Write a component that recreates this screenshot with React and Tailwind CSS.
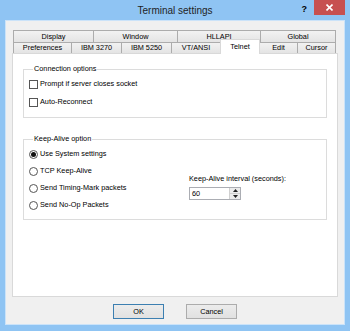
export default function App() {
  const row1 = [
    ["Display", "w-[80px]"],
    ["Window", "w-[84px]"],
    ["HLLAPI", "w-[83px]"],
    ["Global", "w-[76px]"],
  ];
  const row2 = [
    ["Preferences", "w-[58px]"],
    ["IBM 3270", "w-[50px]"],
    ["IBM 5250", "w-[50px]"],
    ["VT/ANSI", "w-[49px]"],
    ["Telnet", "w-[40px]", true],
    ["Edit", "w-[37px]"],
    ["Cursor", "w-[39px]"],
  ];
  const radios = [
    ["Use System settings", true],
    ["TCP Keep-Alive", false],
    ["Send Timing-Mark packets", false],
    ["Send No-Op Packets", false],
  ];
  return (
    <div className="w-[350px] h-[331px] bg-[#8fc4f3] flex flex-col overflow-hidden font-['Liberation_Sans',Arial,sans-serif] text-black">
      {/* title bar */}
      <div className="h-[20px] grid grid-cols-[1fr_auto_1fr] shrink-0">
        <div />
        <div className="text-[10px] leading-[12px] pt-[5px] text-[#1f1f1f]">Terminal settings</div>
        <div className="flex justify-end items-start pr-[5px]">
          <div className="text-[9px] leading-[10px] font-bold mt-[4px] mr-[7px]">?</div>
          <div className="w-[31px] h-[15px] bg-[#c75050] flex items-center justify-center">
            <svg width="7" height="7" viewBox="0 0 7 7">
              <path d="M0.5 0.5 L6.5 6.5 M6.5 0.5 L0.5 6.5" stroke="white" strokeWidth="1.6" />
            </svg>
          </div>
        </div>
      </div>
      {/* client */}
      <div className="flex-1 mx-[5px] mb-[6px] border border-[#cbe3f9] bg-[#f0f0f0] flex flex-col text-[7.3px] leading-[10px]">
        {/* tabs */}
        <div className="pl-[7px] pt-[9px] flex flex-col">
          <div className="flex h-[12px]">
            {row1.map(([t, w], i) => (
              <div
                key={t}
                className={`${w} border-t border-l ${i === row1.length - 1 ? "border-r" : ""} border-[#acacac] bg-gradient-to-b from-[#f2f2f2] to-[#e4e4e4] flex items-center justify-center`}
              >
                {t}
              </div>
            ))}
          </div>
          <div className="flex h-[11px] items-end relative z-10">
            {row2.map(([t, w, sel], i) =>
              sel ? (
                <div
                  key={t}
                  className={`${w} h-[15px] -mb-[1px] border-t border-l border-r border-[#d9d9d9] bg-white flex items-start justify-center pt-[2px]`}
                >
                  {t}
                </div>
              ) : (
                <div
                  key={t}
                  className={`${w} h-[11px] border-t ${row2[i - 1] && row2[i - 1][2] ? "" : "border-l"} ${i === row2.length - 1 ? "border-r" : ""} border-[#acacac] bg-gradient-to-b from-[#f2f2f2] to-[#e4e4e4] flex items-center justify-center`}
                >
                  {t}
                </div>
              )
            )}
          </div>
        </div>
        {/* panel */}
        <div className="ml-[6px] w-[326px] h-[244px] bg-white border border-[#d9d9d9] flex flex-col px-[10px]">
          <fieldset className="mt-[10px] border border-[#dcdcdc] pl-[5px] pb-[9px]">
            <legend className="ml-[4px] px-[1px] leading-[10px]">Connection options</legend>
            <div className="mt-[4px] flex flex-col gap-[6px]">
              {["Prompt if server closes socket", "Auto-Reconnect"].map((t) => (
                <div key={t} className="flex items-center h-[12px] gap-[2px]">
                  <div className="w-[9px] h-[9px] border border-[#555555] bg-white" />
                  <span>{t}</span>
                </div>
              ))}
            </div>
          </fieldset>
          <fieldset className="mt-[16px] border border-[#dcdcdc] pl-[5px] pb-[8px]">
            <legend className="ml-[4px] px-[1px] leading-[10px]">Keep-Alive option</legend>
            <div className="mt-[4px] flex">
              <div className="w-[160px] flex flex-col gap-[5px]">
                {radios.map(([t, on]) => (
                  <div key={t} className="flex items-center h-[12px] gap-[2px]">
                    <div className="w-[9px] h-[9px] rounded-full border border-[#555555] bg-white flex items-center justify-center">
                      {on && <div className="w-[5px] h-[5px] rounded-full bg-[#111]" />}
                    </div>
                    <span>{t}</span>
                  </div>
                ))}
              </div>
              <div className="pt-[26px] flex flex-col">
                <div className="leading-[10px]">Keep-Alive interval (seconds):</div>
                <div className="mt-[3px] w-[52px] h-[13px] border border-[#abadb3] bg-white flex">
                  <div className="flex-1 pl-[2px] leading-[11px]">60</div>
                  <div className="w-[11px] flex flex-col border-l border-[#d0d0d0]">
                    <div className="flex-1 bg-[#ececec] border-b border-[#d0d0d0] flex items-center justify-center">
                      <svg width="5" height="3" viewBox="0 0 5 3"><path d="M0 3 L2.5 0 L5 3 Z" fill="#222" /></svg>
                    </div>
                    <div className="flex-1 bg-[#ececec] flex items-center justify-center">
                      <svg width="5" height="3" viewBox="0 0 5 3"><path d="M0 0 L2.5 3 L5 0 Z" fill="#222" /></svg>
                    </div>
                  </div>
                </div>
              </div>
            </div>
          </fieldset>
        </div>
        {/* buttons */}
        <div className="flex justify-center gap-[22px] mt-[7px]">
          <div className="w-[51px] h-[15px] border border-[#3c7fb1] bg-gradient-to-b from-[#ececec] to-[#e1e1e1] flex items-center justify-center">
            OK
          </div>
          <div className="w-[51px] h-[15px] border border-[#acacac] bg-gradient-to-b from-[#ececec] to-[#e1e1e1] flex items-center justify-center">
            Cancel
          </div>
        </div>
      </div>
    </div>
  );
}
